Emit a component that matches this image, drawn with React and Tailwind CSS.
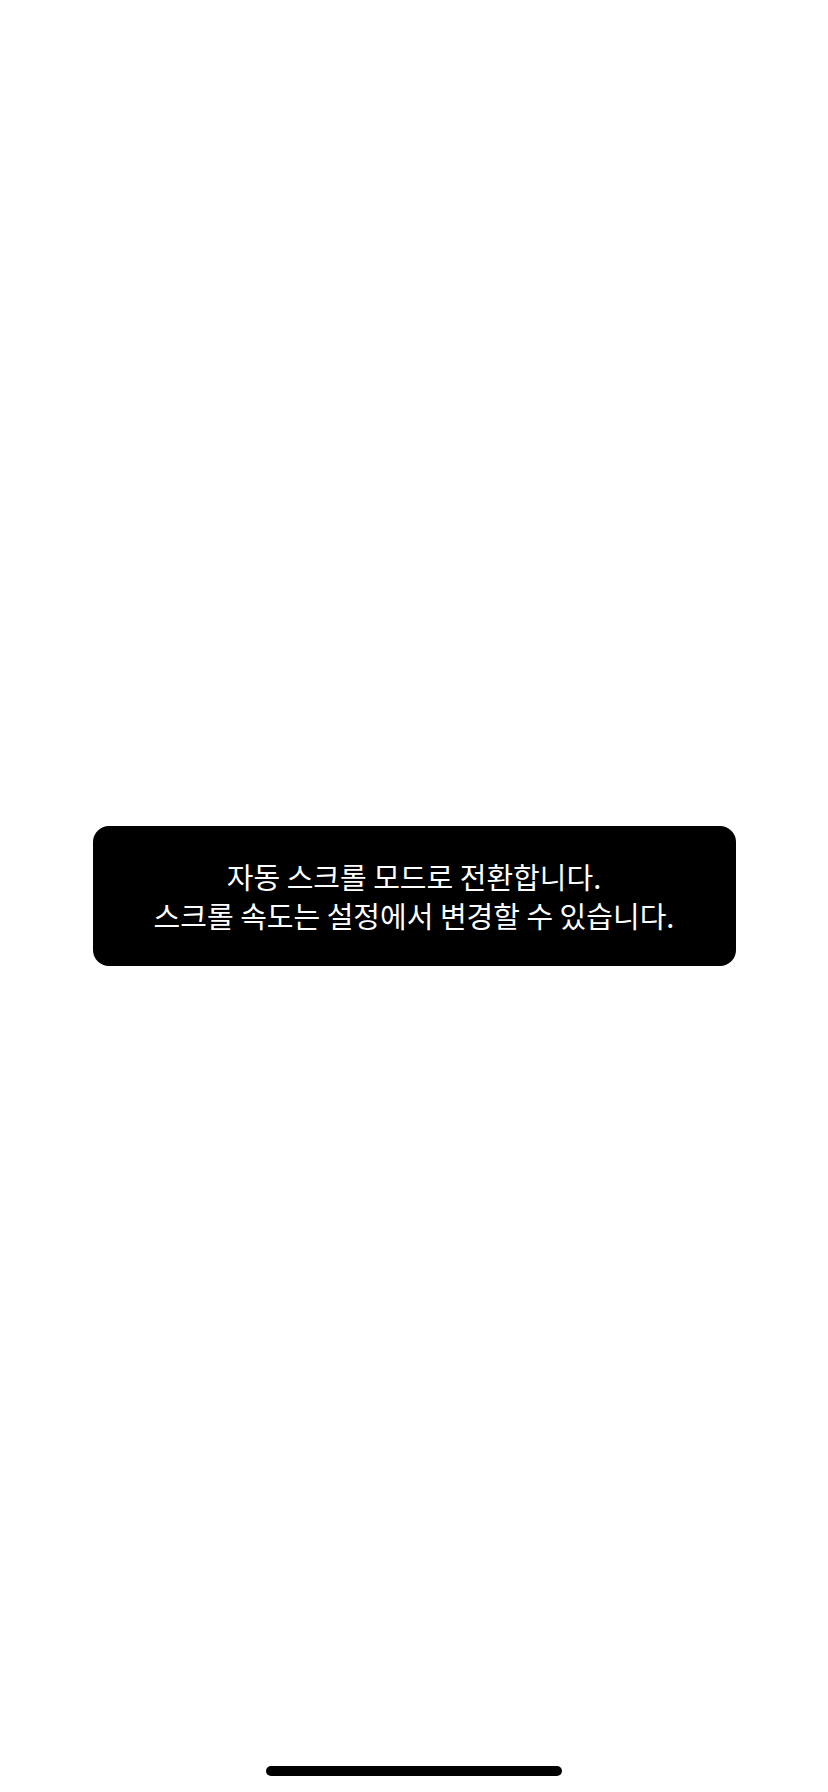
export default function App() {
  return (
    <div
      className="relative flex h-[1792px] w-full items-center justify-center bg-white"
      style={{ fontFamily: '"Noto Sans CJK KR", "Noto Sans", sans-serif' }}
    >
      {/* Toast */}
      <div className="flex h-[140px] w-[643px] flex-col items-center justify-center rounded-[16px] bg-black text-center text-[29px] leading-[39px] text-white">
        <p>자동 스크롤 모드로 전환합니다.</p>
        <p>스크롤 속도는 설정에서 변경할 수 있습니다.</p>
      </div>

      {/* Home indicator */}
      <div className="absolute bottom-[16px] left-1/2 h-[10px] w-[296px] -translate-x-1/2 rounded-full bg-black" />
    </div>
  )
}
